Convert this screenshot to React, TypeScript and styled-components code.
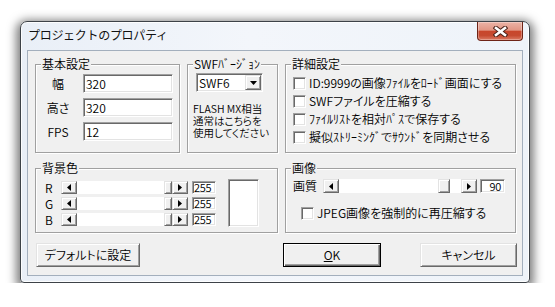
import React from 'react';
import styled, { createGlobalStyle, css } from 'styled-components';

const GlobalStyle = createGlobalStyle`
  html, body {
    margin: 0;
    padding: 0;
    background: #fff;
  }
  body {
    font-family: "Noto Sans CJK JP", "Noto Sans", sans-serif;
    font-size: 12px;
    font-weight: 350;
    line-height: 14px;
    color: #000;
  }
`;

const sunken = css`
  box-sizing: border-box;
  border: 1px solid;
  border-color: #a0a0a0 #fff #fff #a0a0a0;
  box-shadow: inset 1px 1px 0 #696969, inset -1px -1px 0 #e3e3e3;
  background: #fff;
`;

const raised = css`
  box-sizing: border-box;
  border: 1px solid;
  border-color: #e3e3e3 #696969 #696969 #e3e3e3;
  box-shadow: inset 1px 1px 0 #fff, inset -1px -1px 0 #a0a0a0;
  background: #f0f0f0;
`;

const Page = styled.div`
  padding: 21px 0 0 20px;
`;

const Frame = styled.div`
  box-sizing: border-box;
  width: 510px;
  height: 262px;
  padding: 0 6px 6px;
  border: 1px solid #3d4248;
  border-radius: 7px 7px 4px 4px;
  background: linear-gradient(90deg, #e9eff7 0%, #f3f6fb 45%, #eef3f9 100%);
  box-shadow: inset 0 0 0 1px rgba(255, 255, 255, 0.85), 0 3px 10px 4px rgba(0, 0, 0, 0.5);
`;

const TitleBar = styled.div`
  display: flex;
  align-items: flex-start;
  justify-content: space-between;
  height: 28px;
`;

const Title = styled.div`
  margin-top: 6px;
  padding-left: 1px;
  font-size: 12px;
  font-weight: 400;
  letter-spacing: -0.3px;
  color: #111;
`;

const CloseButton = styled.div`
  box-sizing: border-box;
  width: 46px;
  height: 19px;
  display: flex;
  align-items: center;
  justify-content: center;
  border: 1px solid #6e2417;
  border-top: 0;
  border-radius: 0 0 4px 4px;
  background: linear-gradient(#ebb3a6 0%, #e19684 45%, #c8462b 52%, #c64a30 75%, #db7b64 100%);
  box-shadow: inset 0 0 0 1px rgba(255, 255, 255, 0.3);
`;

const Client = styled.div`
  box-sizing: border-box;
  height: 226px;
  border: 1px solid #a3afbd;
  background: #f0f0f0;
  padding: 6px 6px 8px 7px;
  display: flex;
  flex-direction: column;
  font-feature-settings: "palt";
`;

const GroupRow = styled.div<{ $mt?: number }>`
  display: flex;
  gap: 7px;
  margin-top: ${p => p.$mt ?? 0}px;
`;

const GroupBox = styled.div<{ $w: number; $h: number; $pad: string }>`
  position: relative;
  box-sizing: border-box;
  width: ${p => p.$w}px;
  height: ${p => p.$h}px;
  margin-top: 7px;
  padding: ${p => p.$pad};
  border: 1px solid #a0a0a0;
  box-shadow: inset 1px 1px 0 #fff, 1px 1px 0 #fff;
`;

const Caption = styled.span`
  position: absolute;
  top: -8px;
  left: 5px;
  padding: 0 1px;
  line-height: 14px;
  background: #f0f0f0;
`;

const FieldGrid = styled.div`
  display: grid;
  grid-template-columns: 32px 90px;
  column-gap: 9px;
  row-gap: 5px;
  align-items: center;
`;

const FieldLabel = styled.div`
  text-align: center;
`;

const TextBox = styled.div<{ $w: number; $h: number; $right?: boolean; $small?: boolean }>`
  ${sunken};
  width: ${p => p.$w}px;
  height: ${p => p.$h}px;
  padding: ${p => (p.$right ? '0 3px 0 1px' : p.$small ? '0 0 0 1px' : '0 2px')};
  font-size: ${p => (p.$small ? 11 : 12)}px;
  letter-spacing: ${p => (p.$small ? -0.3 : 0)}px;
  line-height: ${p => p.$h - 2}px;
  text-align: ${p => (p.$right ? 'right' : 'left')};
  white-space: nowrap;
`;

const Combo = styled.div`
  ${sunken};
  display: flex;
  align-items: center;
  width: 67px;
  height: 19px;
  margin-left: 3px;
  padding: 1px;
`;

const ComboText = styled.span`
  flex: 1;
  padding-left: 1px;
  line-height: 15px;
`;

const DropButton = styled.div`
  ${raised};
  width: 16px;
  height: 15px;
  display: flex;
  align-items: center;
  justify-content: center;
`;

const Note = styled.div`
  margin-top: 11px;
  font-size: 10.5px;
  line-height: 12px;
  white-space: nowrap;
`;

const CheckList = styled.div`
  display: flex;
  flex-direction: column;
`;

const CheckRow = styled.div<{ $h?: number; $indent?: number; $mt?: number }>`
  display: flex;
  align-items: center;
  gap: 3px;
  height: ${p => p.$h ?? 18}px;
  margin-top: ${p => p.$mt ?? 0}px;
  padding-left: ${p => p.$indent ?? 0}px;
  white-space: nowrap;
`;

const CheckBox = styled.span`
  ${sunken};
  flex: none;
  width: 13px;
  height: 13px;
`;

const ColorBody = styled.div`
  display: flex;
  align-items: flex-start;
`;

const SliderRows = styled.div`
  display: flex;
  flex-direction: column;
  gap: 3px;
`;

const SliderRow = styled.div<{ $h: number }>`
  display: flex;
  align-items: center;
  height: ${p => p.$h}px;
`;

const SliderLabel = styled.span<{ $w: number }>`
  width: ${p => p.$w}px;
  flex: none;
`;

const Preview = styled.div`
  ${sunken};
  width: 31px;
  height: 48px;
  margin: -2px 0 0 12px;
`;

const Scroll = styled.div<{ $w: number; $h: number }>`
  display: flex;
  width: ${p => p.$w}px;
  height: ${p => p.$h}px;
  flex: none;
`;

const ArrowButton = styled.div`
  ${raised};
  width: 16px;
  flex: none;
  display: flex;
  align-items: center;
  justify-content: center;
`;

const Track = styled.div`
  flex: 1;
  display: flex;
  background: #fff;
`;

const Filler = styled.div<{ $grow: number }>`
  flex: ${p => p.$grow} 1 0;
`;

const Thumb = styled.div<{ $w: number }>`
  ${raised};
  width: ${p => p.$w}px;
  flex: none;
`;

const ValueGap = styled.span<{ $w: number }>`
  width: ${p => p.$w}px;
  flex: none;
`;

const ButtonRow = styled.div`
  display: flex;
  margin: 10px -1px 0 1px;
`;

const Spacer = styled.div`
  flex: 1;
`;

const PushButton = styled.div<{ $w: number; $default?: boolean; $mr?: number }>`
  box-sizing: border-box;
  width: ${p => p.$w}px;
  height: 24px;
  margin-right: ${p => p.$mr ?? 0}px;
  display: flex;
  align-items: center;
  justify-content: center;
  background: #f0f0f0;
  white-space: nowrap;
  ${p =>
    p.$default
      ? css`
          border: 1px solid #000;
          box-shadow: inset 1px 1px 0 #fff, inset -1px -1px 0 #696969, inset -2px -2px 0 #a0a0a0;
        `
      : raised};
`;

const Arrow = ({ dir }: { dir: 'left' | 'right' | 'down' }) => {
  if (dir === 'down') {
    return (
      <svg width="7" height="4" viewBox="0 0 7 4">
        <polygon points="0,0 7,0 3.5,4" fill="#000" />
      </svg>
    );
  }
  return (
    <svg width="4" height="7" viewBox="0 0 4 7">
      <polygon points={dir === 'left' ? '4,0 4,7 0,3.5' : '0,0 0,7 4,3.5'} fill="#000" />
    </svg>
  );
};

interface ScrollBarProps {
  width: number;
  height: number;
  value: number;
  max: number;
  thumb: number;
}

const ScrollBar: React.FC<ScrollBarProps> = ({ width, height, value, max, thumb }) => (
  <Scroll $w={width} $h={height}>
    <ArrowButton>
      <Arrow dir="left" />
    </ArrowButton>
    <Track>
      <Filler $grow={value} />
      <Thumb $w={thumb} />
      <Filler $grow={max - value} />
    </Track>
    <ArrowButton>
      <Arrow dir="right" />
    </ArrowButton>
  </Scroll>
);

const options = [
  'ID:9999の画像ﾌｧｲﾙをﾛｰﾄﾞ画面にする',
  'SWFファイルを圧縮する',
  'ﾌｧｲﾙﾘｽﾄを相対ﾊﾟｽで保存する',
  '擬似ｽﾄﾘｰﾐﾝｸﾞでｻｳﾝﾄﾞを同期させる',
];

const basics = [
  { label: '幅', value: '320' },
  { label: '高さ', value: '320' },
  { label: 'FPS', value: '12' },
];

const colors = ['R', 'G', 'B'];

export default function App() {
  return (
    <Page>
      <GlobalStyle />
      <Frame>
        <TitleBar>
          <Title>プロジェクトのプロパティ</Title>
          <CloseButton>
            <svg width="15" height="11" viewBox="0 0 15 11">
              <path d="M3 2 L12 9 M12 2 L3 9" stroke="#4a2219" strokeWidth="4.6" strokeLinecap="square" />
              <path d="M3 2 L12 9 M12 2 L3 9" stroke="#fff" strokeWidth="2.6" strokeLinecap="square" />
            </svg>
          </CloseButton>
        </TitleBar>
        <Client>
          <GroupRow>
            <GroupBox $w={145} $h={89} $pad="9px 0 0 6px">
              <Caption>基本設定</Caption>
              <FieldGrid>
                {basics.map(b => (
                  <React.Fragment key={b.label}>
                    <FieldLabel>{b.label}</FieldLabel>
                    <TextBox $w={90} $h={19}>{b.value}</TextBox>
                  </React.Fragment>
                ))}
              </FieldGrid>
            </GroupBox>
            <GroupBox $w={91} $h={89} $pad="8px 0 0 5px">
              <Caption>SWFﾊﾞｰｼﾞｮﾝ</Caption>
              <Combo>
                <ComboText>SWF6</ComboText>
                <DropButton>
                  <Arrow dir="down" />
                </DropButton>
              </Combo>
              <Note>
                FLASH MX相当
                <br />
                通常はこちらを
                <br />
                使用してください
              </Note>
            </GroupBox>
            <GroupBox $w={231} $h={89} $pad="9px 0 0 7px">
              <Caption>詳細設定</Caption>
              <CheckList>
                {options.map(o => (
                  <CheckRow key={o}>
                    <CheckBox />
                    <span>{o}</span>
                  </CheckRow>
                ))}
              </CheckList>
            </GroupBox>
          </GroupRow>
          <GroupRow $mt={8}>
            <GroupBox $w={243} $h={65} $pad="12px 0 0 9px">
              <Caption>背景色</Caption>
              <ColorBody>
                <SliderRows>
                  {colors.map(c => (
                    <SliderRow key={c} $h={13}>
                      <SliderLabel $w={16}>{c}</SliderLabel>
                      <ScrollBar width={127} height={13} value={255} max={255} thumb={8} />
                      <ValueGap $w={4} />
                      <TextBox $w={24} $h={13} $small>255</TextBox>
                    </SliderRow>
                  ))}
                </SliderRows>
                <Preview />
              </ColorBody>
            </GroupBox>
            <GroupBox $w={231} $h={65} $pad="10px 0 0 7px">
              <Caption>画像</Caption>
              <SliderRow $h={14}>
                <SliderLabel $w={30}>画質</SliderLabel>
                <ScrollBar width={154} height={14} value={90} max={100} thumb={12} />
                <ValueGap $w={3} />
                <TextBox $w={25} $h={14} $right $small>90</TextBox>
              </SliderRow>
              <CheckRow $h={16} $indent={8} $mt={12}>
                <CheckBox />
                <span>JPEG画像を強制的に再圧縮する</span>
              </CheckRow>
            </GroupBox>
          </GroupRow>
          <ButtonRow>
            <PushButton $w={104}>デフォルトに設定</PushButton>
            <Spacer />
            <PushButton $w={98} $default $mr={39}>
              <span>
                <u>O</u>K
              </span>
            </PushButton>
            <PushButton $w={97}>キャンセル</PushButton>
          </ButtonRow>
        </Client>
      </Frame>
    </Page>
  );
}
